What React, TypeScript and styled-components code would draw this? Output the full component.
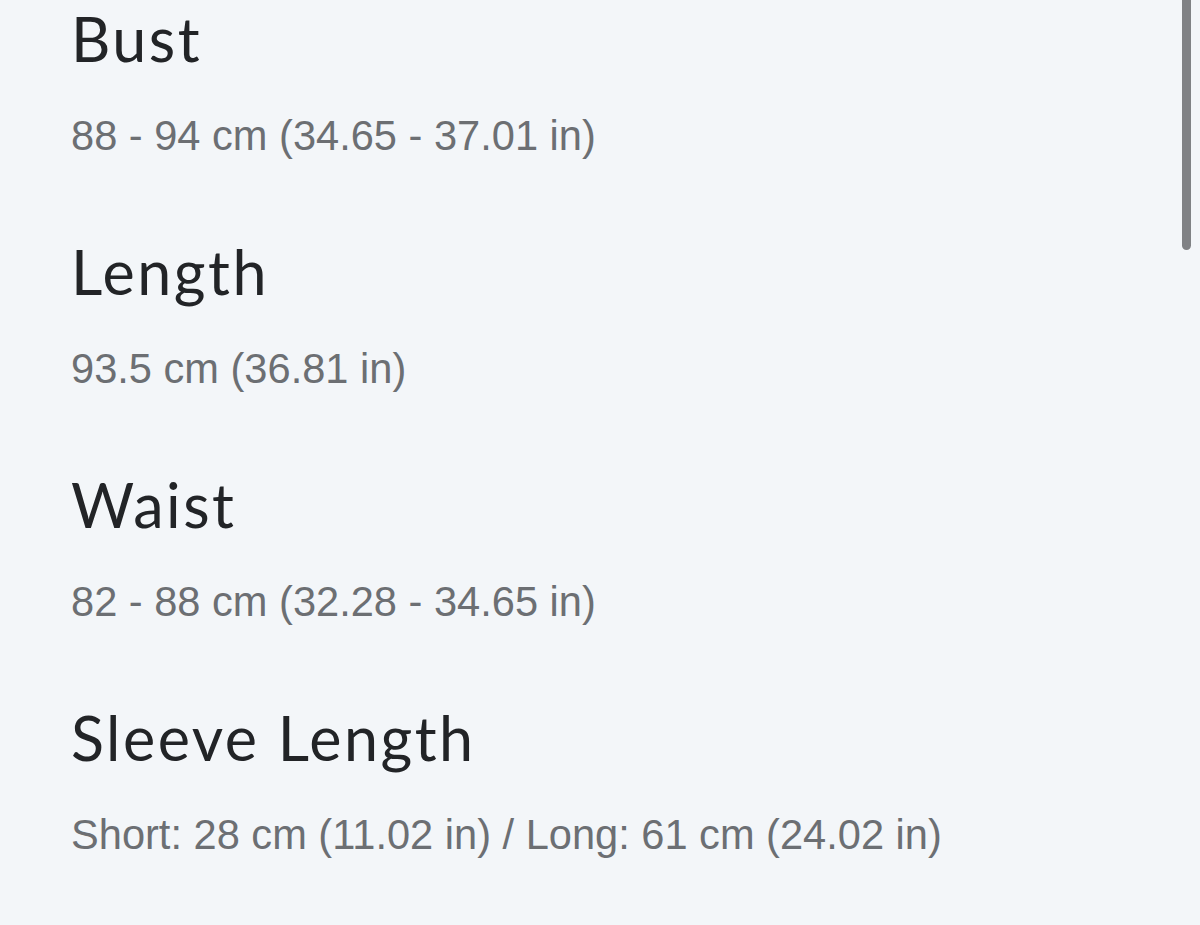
import React from "react";
import styled, { createGlobalStyle } from "styled-components";

const Global = createGlobalStyle`
  html, body { margin: 0; padding: 0; background: #f3f6f9; }
  body { width: 1200px; height: 925px; overflow: hidden; }
`;

const Page = styled.main`
  position: relative;
  box-sizing: border-box;
  width: 1200px;
  height: 925px;
  padding: 3px 0 0 71px;
  display: flex;
  flex-direction: column;
  gap: 77px;
  background: #f3f6f9;
`;

const Section = styled.section`
  display: flex;
  flex-direction: column;
  gap: 38px;
`;

const Heading = styled.h2`
  margin: 0;
  font-family: "Lato", "Noto Sans", sans-serif;
  font-weight: 400;
  font-size: 61px;
  line-height: 72px;
  color: #222427;
  letter-spacing: 2.5px;
`;

const Value = styled.p`
  margin: 0;
  font-family: "Liberation Sans", Arial, sans-serif;
  font-size: 41.6px;
  line-height: 46px;
  color: #6c6f73;
`;

const Scrollbar = styled.div`
  position: absolute;
  top: -6px;
  left: 1182px;
  width: 9px;
  height: 256px;
  border-radius: 5px;
  background: #808285;
`;

const items = [
  { label: "Bust", value: "88 - 94 cm (34.65 - 37.01 in)" },
  { label: "Length", value: "93.5 cm (36.81 in)" },
  { label: "Waist", value: "82 - 88 cm (32.28 - 34.65 in)" },
  { label: "Sleeve Length", value: "Short: 28 cm (11.02 in) / Long: 61 cm (24.02 in)" },
];

export default function App() {
  return (
    <>
      <Global />
      <Page>
        {items.map((it) => (
          <Section key={it.label}>
            <Heading>{it.label}</Heading>
            <Value>{it.value}</Value>
          </Section>
        ))}
        <Scrollbar />
      </Page>
    </>
  );
}
